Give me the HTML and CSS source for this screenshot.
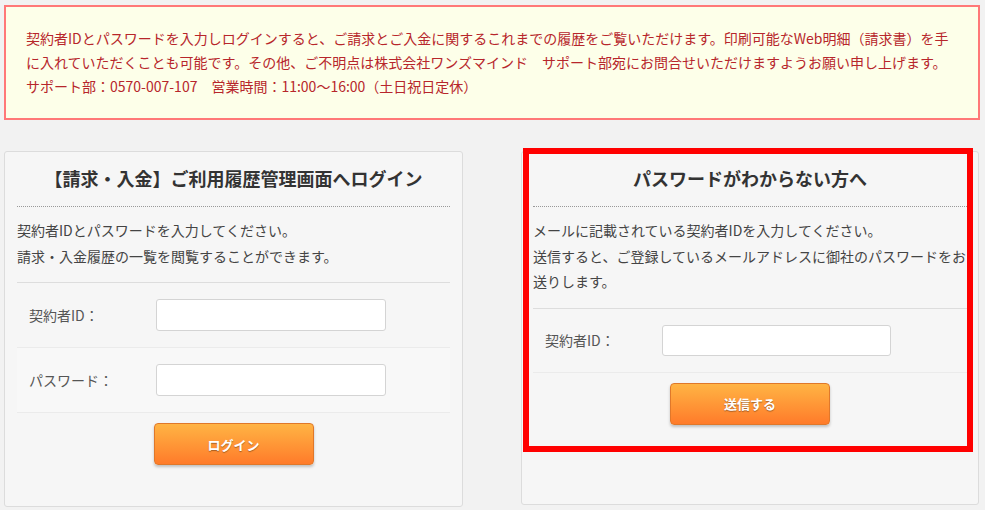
FILE: index.html
```html
<!DOCTYPE html>
<html lang="ja">
  <head>
    <meta charset="utf-8" />
    <title>ログイン</title>
    <link rel="stylesheet" href="styles.css">
  </head>
  <body>
    <div class="notice">
      契約者IDとパスワードを入力しログインすると、ご請求とご入金に関するこれまでの履歴をご覧いただけます。印刷可能なWeb明細（請求書）を手に入れていただくことも可能です。その他、ご不明点は株式会社ワンズマインド　サポート部宛にお問合せいただけますようお願い申し上げます。<br>
      サポート部：0570-007-107　営業時間：11:00～16:00（土日祝日定休）
    </div>

    <div class="panels">
      <div class="panel panel-login">
        <h2 class="panel-title">【請求・入金】ご利用履歴管理画面へログイン</h2>
        <p class="panel-text">契約者IDとパスワードを入力してください。<br>請求・入金履歴の一覧を閲覧することができます。</p>
        <div class="form-row">
          <label class="form-label">契約者ID：</label>
          <input class="form-input" type="text">
        </div>
        <div class="form-row alt">
          <label class="form-label">パスワード：</label>
          <input class="form-input" type="password">
        </div>
        <div class="form-actions"><button class="btn">ログイン</button></div>
      </div>

      <div class="panel panel-forgot">
        <h2 class="panel-title">パスワードがわからない方へ</h2>
        <p class="panel-text">メールに記載されている契約者IDを入力してください。<br>送信すると、ご登録しているメールアドレスに御社のパスワードをお送りします。</p>
        <div class="form-row">
          <label class="form-label">契約者ID：</label>
          <input class="form-input" type="text">
        </div>
        <div class="form-actions"><button class="btn">送信する</button></div>
        <div class="highlight"></div>
      </div>
    </div>
  </body>
</html>
```
FILE: styles.css
```css
* { box-sizing: border-box; }
body { margin: 0; padding: 5px 5px 0 4px; background-color: #f2f2f2; font-family: "Noto Sans CJK JP", "Noto Sans", sans-serif; font-size: 14px; color: #444; overflow: hidden; }

.notice { width: 976px; border: 2px solid #ff7878; background-color: #fdffe9; color: #b7262b; line-height: 24px; padding: 19px 20px 20px 20px; }

.panels { display: flex; align-items: flex-start; gap: 58px; margin-top: 31px; }
.panel { position: relative; background-color: #f6f6f6; border: 1px solid #dcdcdc; border-radius: 3px; padding: 0 12px; }
.panel-login { width: 459px; padding-bottom: 41px; }
.panel-forgot { width: 458px; height: 354px; padding: 0 11px; }

.panel-title { margin: 0; padding: 13px 0 14px 0; font-size: 18px; line-height: 27px; font-weight: bold; color: #333; text-align: center; border-bottom: 1px dotted #999; }
.panel-text { margin: 0; padding: 11px 0 13px 0; line-height: 25.5px; color: #444; border-bottom: 1px solid #dddddd; }

.form-row { display: flex; align-items: center; padding: 16px 0 16px 12px; border-bottom: 1px solid #ebebeb; }
.form-row.alt { background-color: #f8f8f8; }
.form-label { width: 127px; color: #555; line-height: 20px; }
.panel-forgot .form-label { width: 117px; }
.form-input { width: 230px; height: 32px; border: 1px solid #d4d4d4; border-radius: 3px; background: #fff; font-size: 14px; padding: 4px 6px; }
.panel-forgot .form-input { width: 229px; height: 31px; }

.form-actions { text-align: center; padding-top: 10px; }
.btn { width: 160px; height: 42px; border: 1px solid #e0782a; border-radius: 4px; background: linear-gradient(#ffb444, #ff7b2a); color: #fff; font-family: inherit; font-size: 13px; font-weight: bold; text-shadow: 0 1px 1px rgba(0, 0, 0, 0.35); box-shadow: 0 2px 3px rgba(0, 0, 0, 0.22); cursor: pointer; }

.highlight { position: absolute; left: 1px; top: -4px; width: 450px; height: 304px; border: 6px solid #ff0000; pointer-events: none; }
```
